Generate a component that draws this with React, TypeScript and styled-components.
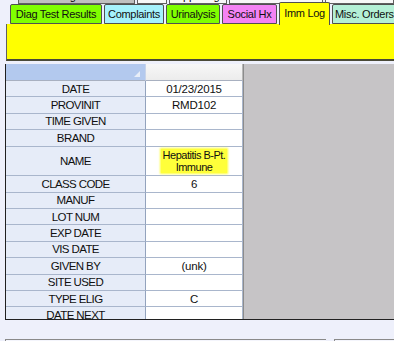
import { Fragment } from "react";
import styled, { createGlobalStyle } from "styled-components";

const Global = createGlobalStyle`
  body {
    margin: 0;
    background: #eef0fb;
    font-family: "Liberation Sans", Arial, sans-serif;
  }
`;

const Screen = styled.div`
  width: 394px;
  height: 341px;
  overflow: hidden;
  display: flex;
  flex-direction: column;
  & > * {
    flex-shrink: 0;
  }
`;

const BackStrip = styled.div`
  height: 4px;
  overflow: hidden;
`;

const BackRow = styled.div`
  display: flex;
  gap: 2px;
  margin-top: -12px;
  padding-left: 18px;
`;

const BackTab = styled.div<{ $w: number; $gray?: boolean }>`
  width: ${(p) => p.$w}px;
  height: 16px;
  box-sizing: border-box;
  border: 1px solid #606060;
  background: ${(p) => (p.$gray ? "#c0c0c0" : "#f8f8f8")};
  font-size: 11px;
  line-height: 14px;
  text-align: center;
  white-space: nowrap;
  overflow: hidden;
`;

const TabRow = styled.div`
  height: 20px;
  display: flex;
  align-items: flex-end;
  gap: 2px;
  padding-left: 10px;
`;

const Tab = styled.div<{ $bg: string; $active?: boolean; $w: number; $left?: boolean }>`
  width: ${(p) => p.$w}px;
  height: ${(p) => (p.$active ? 23 : 20)}px;
  margin-bottom: ${(p) => (p.$active ? -1 : 0)}px;
  box-sizing: border-box;
  background: ${(p) => p.$bg};
  border: 1px solid #505050;
  border-bottom: ${(p) => (p.$active ? "none" : "1px solid #505050")};
  border-radius: 2px 2px 0 0;
  font-size: 11px;
  letter-spacing: -0.3px;
  color: #101010;
  display: flex;
  align-items: ${(p) => (p.$active ? "flex-start" : "center")};
  padding: ${(p) => (p.$active ? "4px 0 0" : p.$left ? "0 0 0 2px" : "0")};
  justify-content: ${(p) => (p.$left ? "flex-start" : "center")};
  white-space: nowrap;
  overflow: hidden;
  flex-shrink: 0;
  position: relative;
  z-index: ${(p) => (p.$active ? 1 : 0)};
`;

const Panel = styled.div`
  margin-left: 6px;
  height: 35px;
  background: #ffff00;
  border-left: 1px solid #606060;
  border-bottom: 2px solid #4a4a38;
`;

const GridZone = styled.div`
  margin-top: 3px;
  margin-left: 5px;
  height: 255px;
  display: flex;
  border-left: 1px solid #202020;
  border-bottom: 1px solid #202020;
  overflow: hidden;
`;

const Table = styled.div`
  width: 237px;
  display: grid;
  grid-template-columns: 140px 97px;
  align-content: start;
`;

const HeadCell = styled.div<{ $corner?: boolean }>`
  height: 17px;
  box-sizing: border-box;
  background: ${(p) =>
    p.$corner ? "#b3c9ee" : "linear-gradient(#f7f7f7, #ececec)"};
  border-right: 1px solid ${(p) => (p.$corner ? "#c8d4ea" : "#b8b8b8")};
  border-bottom: 1px solid #a8b0c0;
  position: relative;
`;

const SortMark = styled.div`
  position: absolute;
  right: 5px;
  bottom: 3px;
  width: 0;
  height: 0;
  border-left: 6px solid transparent;
  border-bottom: 6px solid #e8eef8;
`;

const Cell = styled.div<{ $label?: boolean; $tall?: boolean }>`
  height: ${(p) => (p.$tall ? 29.6 : 16.4)}px;
  box-sizing: border-box;
  background: ${(p) => (p.$label ? "#e6ecf8" : "#ffffff")};
  border-bottom: 1px solid #a9b6cc;
  border-right: 1px solid ${(p) => (p.$label ? "#93a3bd" : "#a9b6cc")};
  font-size: 11.5px;
  letter-spacing: ${(p) => (p.$label ? "-0.6px" : "-0.2px")};
  color: #101010;
  display: flex;
  align-items: center;
  justify-content: center;
  text-align: center;
  white-space: nowrap;
`;

const Marked = styled.span`
  background: #ffff3a;
  font-size: 11px;
  line-height: 12px;
  letter-spacing: -0.5px;
  padding: 0 2px;
  box-shadow: 0 0 2px 1px #ffff3a;
`;

const Blank = styled.div`
  flex: 1;
  background: #c6c4c6;
  border-left: 1px solid #8c8c8c;
`;

const Footer = styled.div`
  margin-top: 19px;
  display: flex;
  gap: 8px;
  padding-left: 5px;
`;

const FooterBox = styled.div<{ $w: number }>`
  width: ${(p) => p.$w}px;
  height: 10px;
  border-top: 1px solid #8a8a8a;
  border-left: 1px solid #8a8a8a;
  background: #f4f5fc;
`;

const backTabs = [
  { t: "Pt. Findings/Diseases", w: 119, g: true },
  { t: "Plans", w: 30 },
  { t: "Appt Log", w: 59 },
  { t: "Chart Notes/Letters", w: 96 },
  { t: "Immunizations", w: 70 },
];

const tabs = [
  { t: "Diag Test Results", bg: "#80ff00", w: 92 },
  { t: "Complaints", bg: "#a6f2fc", w: 60 },
  { t: "Urinalysis", bg: "#80ff00", w: 54 },
  { t: "Social Hx", bg: "#f483f4", w: 55 },
  { t: "Imm Log", bg: "#ffff00", w: 51, active: true },
  { t: "Misc. Orders", bg: "#b4f0d6", w: 66, left: true },
];

const rows: { label: string; value?: string; tall?: boolean }[] = [
  { label: "DATE", value: "01/23/2015" },
  { label: "PROVINIT", value: "RMD102" },
  { label: "TIME GIVEN" },
  { label: "BRAND" },
  { label: "NAME", tall: true },
  { label: "CLASS CODE", value: "6" },
  { label: "MANUF" },
  { label: "LOT NUM" },
  { label: "EXP DATE" },
  { label: "VIS DATE" },
  { label: "GIVEN BY", value: "(unk)" },
  { label: "SITE USED" },
  { label: "TYPE ELIG", value: "C" },
  { label: "DATE NEXT" },
  { label: "" },
];

function App() {
  return (
    <>
      <Global />
      <Screen>
        <BackStrip>
          <BackRow>
            {backTabs.map((b) => (
              <BackTab key={b.t} $w={b.w} $gray={b.g}>
                {b.t}
              </BackTab>
            ))}
          </BackRow>
        </BackStrip>
        <TabRow>
          {tabs.map((t) => (
            <Tab key={t.t} $bg={t.bg} $w={t.w} $active={t.active} $left={t.left}>
              {t.t}
            </Tab>
          ))}
        </TabRow>
        <Panel />
        <GridZone>
          <Table>
            <HeadCell $corner>
              <SortMark />
            </HeadCell>
            <HeadCell />
            {rows.map((r, i) => (
              <Fragment key={i}>
                <Cell $label $tall={r.tall}>
                  {r.label}
                </Cell>
                <Cell $tall={r.tall}>
                  {r.tall ? (
                    <Marked>
                      Hepatitis B-Pt.
                      <br />
                      Immune
                    </Marked>
                  ) : (
                    r.value
                  )}
                </Cell>
              </Fragment>
            ))}
          </Table>
          <Blank />
        </GridZone>
        <Footer>
          <FooterBox $w={326} />
          <FooterBox $w={60} />
        </Footer>
      </Screen>
    </>
  );
}

export default App;
